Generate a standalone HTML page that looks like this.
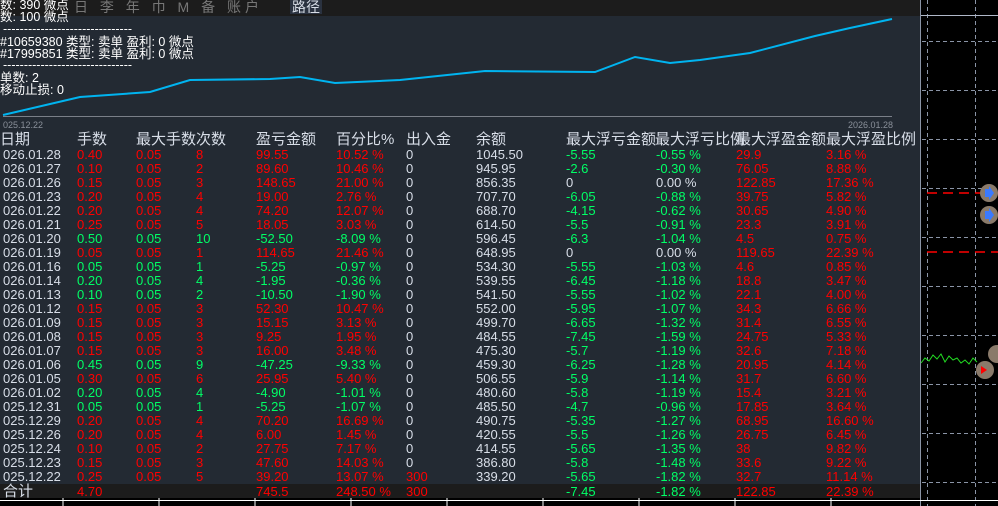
<!DOCTYPE html>
<html><head><meta charset="utf-8"><style>
*{margin:0;padding:0;box-sizing:border-box}
body{width:998px;height:506px;background:#000;position:relative;overflow:hidden;font-family:"Liberation Sans","Noto Sans CJK SC",sans-serif}
.panel{position:absolute;left:0;top:0;width:920px;height:484px;background:#232a33}
.top{position:absolute;left:0;top:0;width:920px;height:16px;background:#1c1c1c}
.t{position:absolute;white-space:nowrap;font-size:13px;line-height:14px}
.w{color:#d8dee8}.r{color:#ff0000}.g{color:#00ff66}
.h{position:absolute;white-space:nowrap;font-size:15px;line-height:16px;color:#d8dee8;top:132px}
.o{position:absolute;white-space:nowrap;font-size:12.5px;line-height:12px;color:#fff}
</style></head><body>
<div class="panel"></div>
<div class="top"></div>
<!-- right area grid -->
<svg style="position:absolute;left:0;top:0" width="998" height="506">
<g stroke="#8a94a6" stroke-width="1" stroke-dasharray="4,3">
<line x1="927.5" y1="0" x2="927.5" y2="506"/><line x1="975.5" y1="0" x2="975.5" y2="506"/>
<line x1="922" y1="41.5" x2="998" y2="41.5"/><line x1="922" y1="90.5" x2="998" y2="90.5"/>
<line x1="922" y1="188.5" x2="998" y2="188.5"/><line x1="922" y1="237.5" x2="998" y2="237.5"/>
<line x1="922" y1="286.5" x2="998" y2="286.5"/><line x1="922" y1="335.5" x2="998" y2="335.5"/>
<line x1="922" y1="384.5" x2="998" y2="384.5"/><line x1="922" y1="433.5" x2="998" y2="433.5"/>
<line x1="922" y1="482.5" x2="998" y2="482.5"/><line x1="922" y1="139.5" x2="998" y2="139.5"/>
</g>
<line x1="920" y1="15.5" x2="998" y2="15.5" stroke="#b0b8c8"/>
<line x1="920.5" y1="0" x2="920.5" y2="506" stroke="#8a94a6"/>
<g stroke="#ff0000" stroke-width="1.5" stroke-dasharray="10,6"><line x1="927" y1="193" x2="998" y2="193"/><line x1="927" y1="252" x2="998" y2="252"/></g>
<g fill="#8a7a6a"><circle cx="989" cy="193" r="9"/><circle cx="989" cy="215" r="9"/><circle cx="997" cy="354" r="9"/><circle cx="985" cy="370" r="9"/></g>
<g fill="#3a7aff"><path d="M985 189h4v-3l5 7-5 7v-3h-4z"/><path d="M985 211h4v-3l5 7-5 7v-3h-4z"/></g>
<path d="M981 366l6 4-6 4z" fill="#ff0000"/>
<polyline points="921,363 925,358 929,361 933,355 937,359 941,354 945,362 949,356 953,360 957,358 961,363 965,360 969,364 973,358 977,362" fill="none" stroke="#22dd22" stroke-width="1"/>
<!-- chart -->
<line x1="3" y1="116.5" x2="892" y2="116.5" stroke="#7a7f88"/>
<polyline points="3,115 80,97 150,92 190,80 270,79 300,77 335,83 400,80 485,71 595,72 635,57 670,63 700,60 750,53 815,36 850,28 892,19" fill="none" stroke="#00b4f0" stroke-width="2"/>
<!-- bottom axis -->
<line x1="0" y1="500.5" x2="998" y2="500.5" stroke="#fff"/>
<g stroke="#fff"><line x1="63" y1="497" x2="63" y2="506"/><line x1="159" y1="497" x2="159" y2="506"/><line x1="255" y1="497" x2="255" y2="506"/><line x1="351" y1="497" x2="351" y2="506"/><line x1="447" y1="497" x2="447" y2="506"/><line x1="543" y1="497" x2="543" y2="506"/><line x1="639" y1="497" x2="639" y2="506"/><line x1="735" y1="497" x2="735" y2="506"/><line x1="831" y1="497" x2="831" y2="506"/></g>
</svg>
<div style="position:absolute;left:0;top:484px;width:920px;height:14px;background:#1c1c1c"></div>
<div class="t" style="left:74px;top:0;color:#777;font-size:14px;letter-spacing:4px">日 李 年 巾 M 备 账户</div>
<div class="t" style="left:290px;top:0;color:#d8dee8;font-size:14px;background:#2a3240;padding:0 2px">路径</div>
<div class="t" style="left:3px;top:118px;font-size:9px;color:#8a909a">025.12.22</div>
<div class="t" style="left:848px;top:118px;font-size:9px;color:#8a909a">2026.01.28</div>
<div class="o" style="left:0;top:-1px">数: 390 微点</div>
<div class="o" style="left:0;top:11px">数: 100 微点</div>
<div class="o" style="left:3px;top:23px">-------------------------------</div>
<div class="o" style="left:0;top:36px">#10659380 类型: 卖单 盈利: 0 微点</div>
<div class="o" style="left:0;top:48px">#17995851 类型: 卖单 盈利: 0 微点</div>
<div class="o" style="left:3px;top:59px">-------------------------------</div>
<div class="o" style="left:0;top:72px">单数: 2</div>
<div class="o" style="left:0;top:84px">移动止损: 0</div>
<div class="h" style="left:0">日期</div>
<div class="h" style="left:77px">手数</div>
<div class="h" style="left:136px">最大手数次数</div>
<div class="h" style="left:256px">盈亏金额</div>
<div class="h" style="left:336px">百分比%</div>
<div class="h" style="left:406px">出入金</div>
<div class="h" style="left:476px">余额</div>
<div class="h" style="left:566px">最大浮亏金额</div>
<div class="h" style="left:655px">最大浮亏比例</div>
<div class="h" style="left:736px">最大浮盈金额</div>
<div class="h" style="left:826px">最大浮盈比例</div>
<div id="rows"></div>
<script>
var d=[
["026.01.28","0.40","0.05","8","99.55","10.52 %","0","1045.50","-5.55","-0.55 %","29.9","3.16 %","r"],
["026.01.27","0.10","0.05","2","89.60","10.46 %","0","945.95","-2.6","-0.30 %","76.05","8.88 %","r"],
["026.01.26","0.15","0.05","3","148.65","21.00 %","0","856.35","0","0.00 %","122.85","17.36 %","r"],
["026.01.23","0.20","0.05","4","19.00","2.76 %","0","707.70","-6.05","-0.88 %","39.75","5.82 %","r"],
["026.01.22","0.20","0.05","4","74.20","12.07 %","0","688.70","-4.15","-0.62 %","30.65","4.90 %","r"],
["026.01.21","0.25","0.05","5","18.05","3.03 %","0","614.50","-5.5","-0.91 %","23.3","3.91 %","r"],
["026.01.20","0.50","0.05","10","-52.50","-8.09 %","0","596.45","-6.3","-1.04 %","4.5","0.75 %","g"],
["026.01.19","0.05","0.05","1","114.65","21.46 %","0","648.95","0","0.00 %","119.65","22.39 %","r"],
["026.01.16","0.05","0.05","1","-5.25","-0.97 %","0","534.30","-5.55","-1.03 %","4.6","0.85 %","g"],
["026.01.14","0.20","0.05","4","-1.95","-0.36 %","0","539.55","-6.45","-1.18 %","18.8","3.47 %","g"],
["026.01.13","0.10","0.05","2","-10.50","-1.90 %","0","541.50","-5.55","-1.02 %","22.1","4.00 %","g"],
["026.01.12","0.15","0.05","3","52.30","10.47 %","0","552.00","-5.95","-1.07 %","34.3","6.66 %","r"],
["026.01.09","0.15","0.05","3","15.15","3.13 %","0","499.70","-6.65","-1.32 %","31.4","6.55 %","r"],
["026.01.08","0.15","0.05","3","9.25","1.95 %","0","484.55","-7.45","-1.59 %","24.75","5.33 %","r"],
["026.01.07","0.15","0.05","3","16.00","3.48 %","0","475.30","-5.7","-1.19 %","32.6","7.18 %","r"],
["026.01.06","0.45","0.05","9","-47.25","-9.33 %","0","459.30","-6.25","-1.28 %","20.95","4.14 %","g"],
["026.01.05","0.30","0.05","6","25.95","5.40 %","0","506.55","-5.9","-1.14 %","31.7","6.60 %","r"],
["026.01.02","0.20","0.05","4","-4.90","-1.01 %","0","480.60","-5.8","-1.19 %","15.4","3.21 %","g"],
["025.12.31","0.05","0.05","1","-5.25","-1.07 %","0","485.50","-4.7","-0.96 %","17.85","3.64 %","g"],
["025.12.29","0.20","0.05","4","70.20","16.69 %","0","490.75","-5.35","-1.27 %","68.95","16.60 %","r"],
["025.12.26","0.20","0.05","4","6.00","1.45 %","0","420.55","-5.5","-1.26 %","26.75","6.45 %","r"],
["025.12.24","0.10","0.05","2","27.75","7.17 %","0","414.55","-5.65","-1.35 %","38","9.82 %","r"],
["025.12.23","0.15","0.05","3","47.60","14.03 %","0","386.80","-5.8","-1.48 %","33.6","9.22 %","r"],
["025.12.22","0.25","0.05","5","39.20","13.07 %","300","339.20","-5.65","-1.82 %","32.7","11.14 %","r"]];
var xs=[3,77,136,196,256,336,406,476,566,656,736,826],h="";
function cell(x,y,c,s){return '<div class="t '+c+'" style="left:'+x+'px;top:'+y+'px">'+s+'</div>';}
d.forEach(function(r,i){var y=148+i*14,c=r[12];
h+=cell(3,y,"w",r[0]);for(var k=1;k<6;k++)h+=cell(xs[k],y,c,r[k]);
h+=cell(406,y,r[6]=="0"?"w":"r",r[6]);h+=cell(476,y,"w",r[7]);
var z=r[8]=="0"?"w":"g";h+=cell(566,y,z,r[8]);h+=cell(656,y,z,r[9]);
h+=cell(736,y,"r",r[10]);h+=cell(826,y,"r",r[11]);});
var y=485;
h+=cell(3,y,"w",'<span style="font-size:15px">合计</span>');h+=cell(77,y,"r","4.70");h+=cell(256,y,"r","745.5");h+=cell(336,y,"r","248.50 %");h+=cell(406,y,"r","300");
h+=cell(566,y,"g","-7.45");h+=cell(656,y,"g","-1.82 %");h+=cell(736,y,"r","122.85");h+=cell(826,y,"r","22.39 %");
document.getElementById("rows").innerHTML=h;
</script>
</body></html>
